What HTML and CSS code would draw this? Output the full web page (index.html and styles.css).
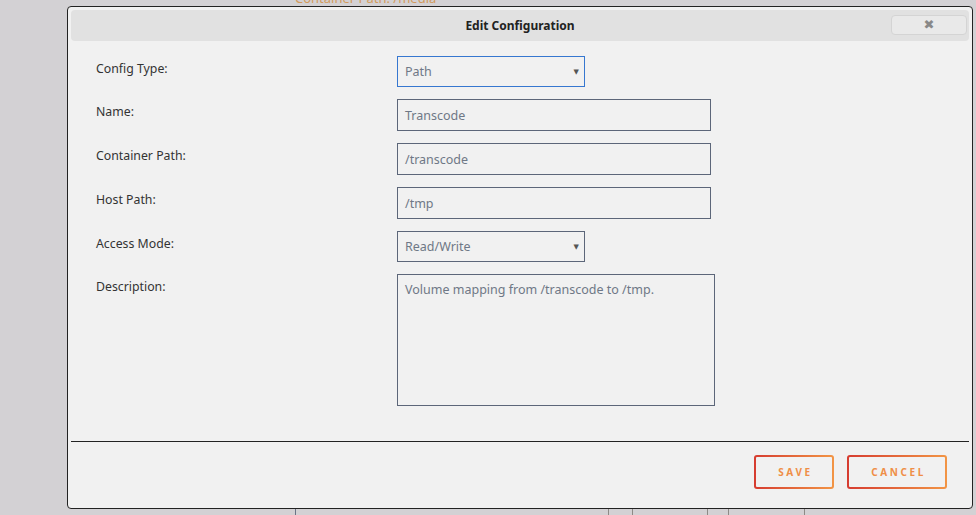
FILE: index.html
```html
<!DOCTYPE html>
<html>
<head>
<meta charset="utf-8">
<link rel="stylesheet" href="styles.css">
</head>
<body>
<div class="page">
  <div class="bg-text">Container Path: /media</div>
  <div class="bg-spacer"></div>
  <div class="bg-row">
    <div class="bg-cell c1"></div>
    <div class="bg-cell c2"></div>
    <div class="bg-cell c3"></div>
    <div class="bg-cell c4"></div>
    <div class="bg-cell c5"></div>
    <div class="bg-cell c6"></div>
  </div>
</div>

<div class="dialog">
  <div class="dialog-header">
    <div class="dialog-title">Edit Configuration</div>
    <button class="close-btn">&#x2716;</button>
  </div>
  <div class="dialog-body">
    <div class="form-row">
      <label class="label">Config Type:</label>
      <div class="field select focused"><span>Path</span><span class="arrow">&#9660;</span></div>
    </div>
    <div class="form-row">
      <label class="label">Name:</label>
      <div class="field input">Transcode</div>
    </div>
    <div class="form-row">
      <label class="label">Container Path:</label>
      <div class="field input">/transcode</div>
    </div>
    <div class="form-row">
      <label class="label">Host Path:</label>
      <div class="field input">/tmp</div>
    </div>
    <div class="form-row">
      <label class="label">Access Mode:</label>
      <div class="field select"><span>Read/Write</span><span class="arrow">&#9660;</span></div>
    </div>
    <div class="form-row">
      <label class="label">Description:</label>
      <div class="field textarea">Volume mapping from /transcode to /tmp.</div>
    </div>
  </div>
  <div class="dialog-footer">
    <button class="btn btn-save">SAVE</button>
    <button class="btn btn-cancel">CANCEL</button>
  </div>
</div>
</body>
</html>
```

FILE: styles.css
```css
html, body {
  margin: 0;
  padding: 0;
}
body {
  background: #d3d1d4;
  font-family: "Noto Sans", "Open Sans", sans-serif;
  width: 976px;
  height: 515px;
  overflow: hidden;
  position: relative;
}
.page {
  height: 515px;
  display: flex;
  flex-direction: column;
}
.bg-text {
  margin-top: -11px;
  margin-left: 295px;
  font-size: 13px;
  line-height: 18px;
  color: #d29a5c;
}
.bg-spacer {
  flex: 1;
}
.bg-row {
  height: 6px;
  display: flex;
}
.bg-cell {
  border-left: 1px solid #6b7486;
  height: 6px;
}
.c1 { margin-left: 295px; width: 312px; }
.c2 { width: 23px; border-left-color: #8d8a86; }
.c3 { width: 74px; border-left-color: #8d8a86; }
.c4 { width: 20px; border-left-color: #8d8a86; }
.c5 { width: 75px; border-left-color: #8d8a86; }
.c6 { width: 100px; border-left-color: #8d8a86; }

.dialog {
  position: absolute;
  left: 67px;
  top: 6px;
  width: 898px;
  height: 495px;
  background: #f1f1f1;
  border: 1px solid #222;
  border-radius: 4px;
  padding: 3px;
  box-sizing: content-box;
  display: flex;
  flex-direction: column;
}
.dialog-header {
  height: 31px;
  flex: none;
  background: #e1e1e1;
  border-radius: 4px;
  display: flex;
  align-items: center;
  justify-content: center;
  position: relative;
}
.dialog-title {
  font-size: 12px;
  font-weight: bold;
  color: #222;
}
.close-btn {
  position: absolute;
  right: 2px;
  top: 5px;
  width: 76px;
  height: 20px;
  background: #e9e9e9;
  border: 1px solid #d4d4d4;
  border-radius: 4px;
  color: #888;
  font-size: 13px;
  padding: 0;
  line-height: 18px;
  font-family: "DejaVu Sans", sans-serif;
}
.dialog-body {
  padding: 15px 0 0 25px;
  display: flex;
  flex-direction: column;
  gap: 12px;
  height: 400px;
  flex: none;
  box-sizing: border-box;
}
.form-row {
  display: flex;
  align-items: flex-start;
}
.label {
  width: 301px;
  font-size: 12.3px;
  color: #333;
  padding-top: 5px;
  line-height: 16px;
}
.field {
  box-sizing: border-box;
  border: 1px solid #5c6679;
  font-size: 12.5px;
  color: #6f7886;
  padding: 0 7px;
  display: flex;
  align-items: center;
}
.select {
  width: 188px;
  height: 31px;
  justify-content: space-between;
  padding-right: 5px;
}
.select.focused {
  border-color: #3677d0;
}
.arrow {
  font-size: 7px;
  color: #555;
  font-family: "DejaVu Sans", sans-serif;
}
.input {
  width: 314px;
  height: 32px;
}
.textarea {
  width: 318px;
  height: 132px;
  align-items: flex-start;
  padding-top: 7px;
  line-height: 16px;
}
.dialog-footer {
  border-top: 1px solid #222;
  flex: 1;
  display: flex;
  justify-content: flex-end;
  align-items: flex-start;
  padding: 13px 22px 0 0;
  gap: 13px;
}
.btn {
  height: 34px;
  border: 2px solid transparent;
  border-radius: 3px;
  background: linear-gradient(#f1f1f1, #f1f1f1) padding-box,
              linear-gradient(90deg, #d63c30, #f29545) border-box;
  color: #ef8e47;
  font-family: "Noto Sans", sans-serif;
  font-size: 10px;
  font-weight: bold;
  letter-spacing: 2.6px;
  padding: 0 0 0 3px;
}
.btn-save { width: 80px; }
.btn-cancel { width: 100px; }
```
